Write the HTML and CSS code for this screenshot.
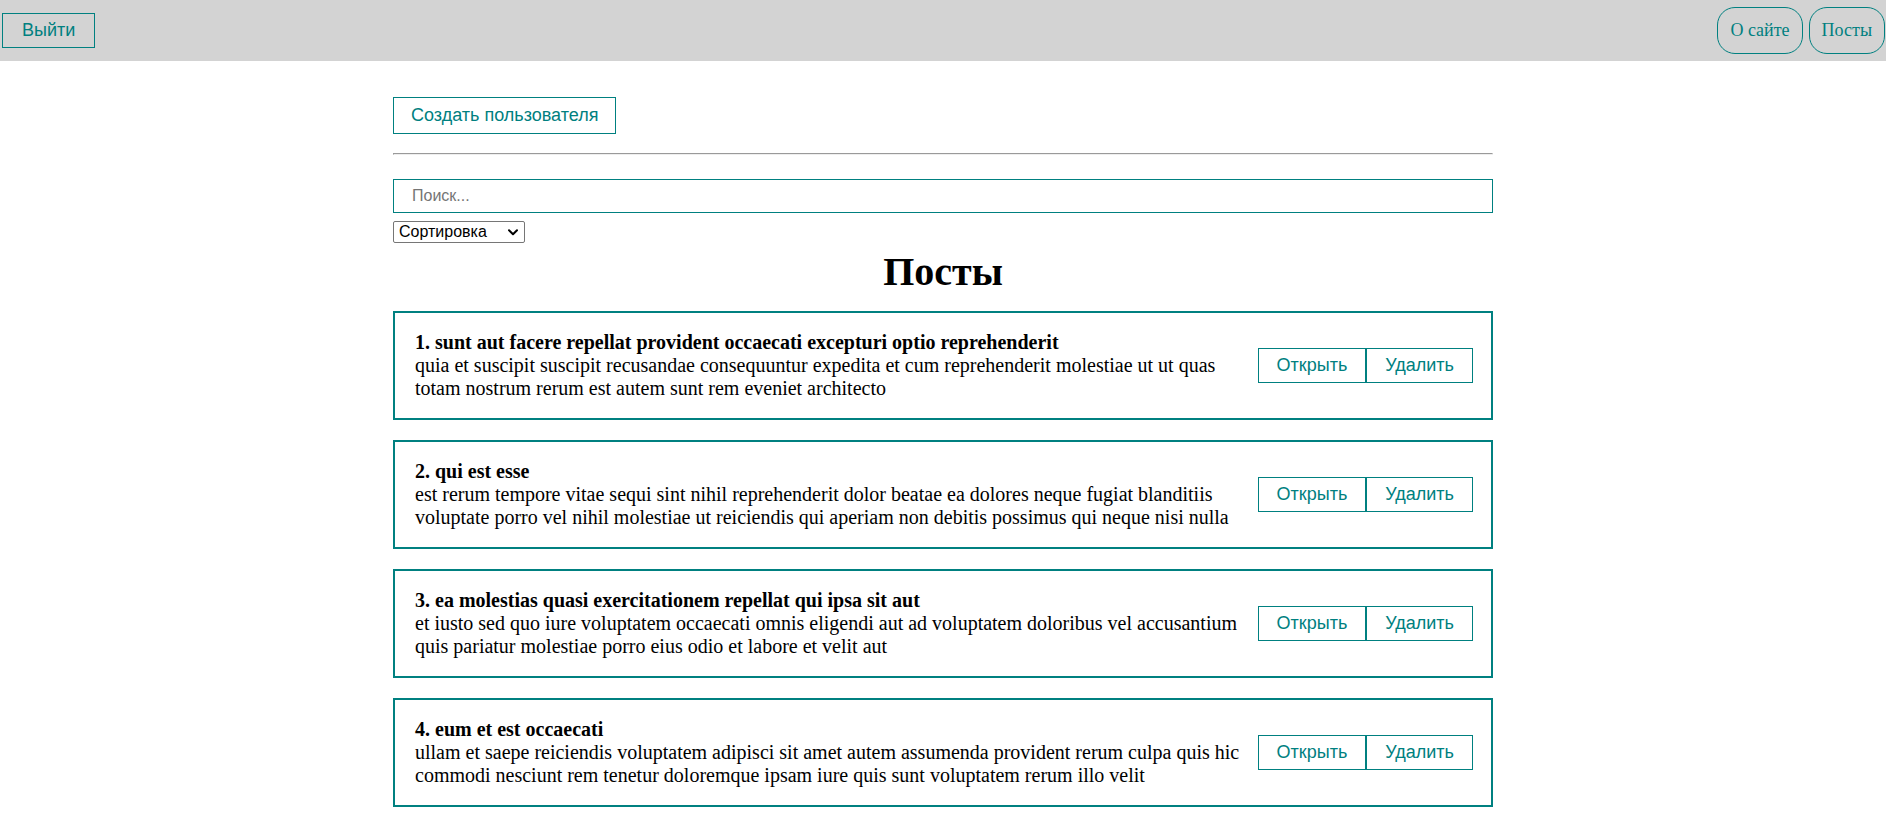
FILE: index.html
```html
<!DOCTYPE html>
<html lang="ru">
<head>
<meta charset="utf-8">
<title>Посты</title>
<link rel="stylesheet" href="styles.css">
</head>
<body>
<header class="navbar">
  <button class="btn">Выйти</button>
  <nav class="nav-links">
    <a class="nav-link" href="#">О сайте</a>
    <a class="nav-link" href="#">Посты</a>
  </nav>
</header>
<main class="container">
  <button class="btn btn-create">Создать пользователя</button>
  <hr class="divider">
  <input class="search" type="text" placeholder="Поиск...">
  <div class="sort-wrap">
    <select class="sort">
      <option>Сортировка</option>
      <option>По названию</option>
      <option>По описанию</option>
    </select>
    <svg class="sort-arrow" width="10" height="7" viewBox="0 0 10 7" aria-hidden="true">
      <path d="M1 1.2 L5 5.2 L9 1.2" fill="none" stroke="#000" stroke-width="2" stroke-linecap="round" stroke-linejoin="round"/>
    </svg>
  </div>
  <h1 class="title">Посты</h1>
  <div class="post">
    <div class="post-content">
      <strong>1. sunt aut facere repellat provident occaecati excepturi optio reprehenderit</strong>
      <div>quia et suscipit suscipit recusandae consequuntur expedita et cum reprehenderit molestiae ut ut quas totam nostrum rerum est autem sunt rem eveniet architecto</div>
    </div>
    <div class="post-btns">
      <button class="btn">Открыть</button><button class="btn">Удалить</button>
    </div>
  </div>
  <div class="post">
    <div class="post-content">
      <strong>2. qui est esse</strong>
      <div>est rerum tempore vitae sequi sint nihil reprehenderit dolor beatae ea dolores neque fugiat blanditiis voluptate porro vel nihil molestiae ut reiciendis qui aperiam non debitis possimus qui neque nisi nulla</div>
    </div>
    <div class="post-btns">
      <button class="btn">Открыть</button><button class="btn">Удалить</button>
    </div>
  </div>
  <div class="post">
    <div class="post-content">
      <strong>3. ea molestias quasi exercitationem repellat qui ipsa sit aut</strong>
      <div>et iusto sed quo iure voluptatem occaecati omnis eligendi aut ad voluptatem doloribus vel accusantium quis pariatur molestiae porro eius odio et labore et velit aut</div>
    </div>
    <div class="post-btns">
      <button class="btn">Открыть</button><button class="btn">Удалить</button>
    </div>
  </div>
  <div class="post">
    <div class="post-content">
      <strong>4. eum et est occaecati</strong>
      <div>ullam et saepe reiciendis voluptatem adipisci sit amet autem assumenda provident rerum culpa quis hic commodi nesciunt rem tenetur doloremque ipsam iure quis sunt voluptatem rerum illo velit</div>
    </div>
    <div class="post-btns">
      <button class="btn">Открыть</button><button class="btn">Удалить</button>
    </div>
  </div>
</main>
</body>
</html>
```

FILE: styles.css
```css
html {
  overflow: hidden;
}
body {
  margin: 0;
  font-family: "Liberation Serif", "Times New Roman", serif;
  font-size: 20px;
  color: #000;
  background: #fff;
}
.navbar {
  height: 61px;
  background: #d3d3d3;
  display: flex;
  align-items: center;
  justify-content: space-between;
  padding: 0 1px 0 2px;
}
.btn {
  font-family: "Liberation Sans", Arial, sans-serif;
  font-size: 18px;
  color: teal;
  background: transparent;
  border: 1px solid teal;
  padding: 6px 19px;
  margin: 0;
  cursor: pointer;
}
.nav-links {
  display: flex;
  gap: 6px;
}
.nav-link {
  font-family: "Liberation Serif", "Times New Roman", serif;
  font-size: 18px;
  color: teal;
  text-decoration: none;
  border: 1px solid teal;
  border-radius: 18px;
  padding: 12px 12px;
}
.container {
  width: 1100px;
  margin: 36px auto 0;
}
.btn-create {
  padding: 7px 17px;
}
.divider {
  margin: 19px 0 24px;
}
.search {
  display: block;
  box-sizing: border-box;
  width: 100%;
  height: 34px;
  margin: 0 0 8px;
  padding: 6px 18px;
  border: 1px solid teal;
  font-family: "Liberation Sans", Arial, sans-serif;
  font-size: 16px;
  outline: none;
}
.sort-wrap {
  position: relative;
  width: 132px;
  height: 22px;
}
.sort {
  appearance: none;
  -webkit-appearance: none;
  display: block;
  box-sizing: border-box;
  width: 132px;
  height: 22px;
  margin: 0;
  padding: 0 20px 0 5px;
  border: 1px solid #767676;
  border-radius: 2px;
  background: #fff;
  color: #000;
  font-family: "Liberation Sans", Arial, sans-serif;
  font-size: 16px;
  line-height: 20px;
}
.sort-arrow {
  position: absolute;
  right: 7px;
  top: 8px;
  pointer-events: none;
}
.title {
  text-align: center;
  font-size: 40px;
  margin: 5px 0 16px;
}
.post {
  display: flex;
  align-items: center;
  gap: 0;
  border: 2px solid teal;
  padding: 18px 18px 18px 20px;
  margin-bottom: 20px;
}
.post-content {
  flex: 1;
}
.post-btns {
  display: flex;
  flex-shrink: 0;
}
.post-btns .btn {
  padding: 6px 18px;
}
```
